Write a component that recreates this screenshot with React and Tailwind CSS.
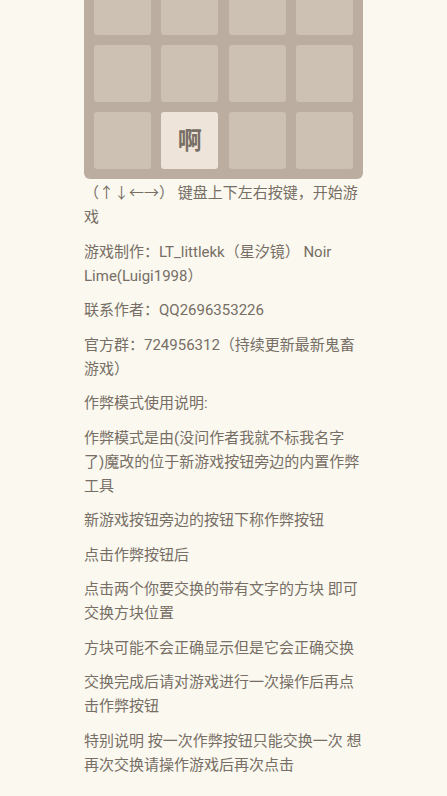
import React from "react";

const grid = [
  ["", "", "", ""],
  ["", "", "", ""],
  ["", "", "", ""],
  ["", "啊", "", ""],
];

const notes = [
  "（↑↓←→） 键盘上下左右按键，开始游戏",
  "游戏制作：LT_littlekk（星汐镜） Noir Lime(Luigi1998）",
  "联系作者：QQ2696353226",
  "官方群：724956312（持续更新最新鬼畜游戏）",
  "作弊模式使用说明:",
  "作弊模式是由(没问作者我就不标我名字了)魔改的位于新游戏按钮旁边的内置作弊工具",
  "新游戏按钮旁边的按钮下称作弊按钮",
  "点击作弊按钮后",
  "点击两个你要交换的带有文字的方块 即可交换方块位置",
  "方块可能不会正确显示但是它会正确交换",
  "交换完成后请对游戏进行一次操作后再点击作弊按钮",
  "特别说明 按一次作弊按钮只能交换一次 想再次交换请操作游戏后再次点击",
];

const Tile = ({ value }) => {
  if (!value) {
    return <div className="w-[57px] h-[57px] rounded-[3px] bg-[#cdc1b4]" />;
  }
  return (
    <div className="w-[57px] h-[57px] rounded-[3px] bg-[#eee4da] flex items-center justify-center text-[24px] font-bold text-[#776e65]">
      {value}
    </div>
  );
};

export default function App() {
  return (
    <div
      className="min-h-[796px] bg-[#faf8ef] overflow-hidden"
      style={{ fontFamily: 'Roboto, "Noto Sans CJK SC", sans-serif' }}
    >
      <div className="w-[279px] ml-[84px]">
        <div className="-mt-[99px] bg-[#bbada0] rounded-[6px] p-[10px] grid grid-cols-4 gap-[10px]">
          {grid.flat().map((v, i) => (
            <Tile key={i} value={v} />
          ))}
        </div>
        <div className="mt-[2px] text-[15px] leading-[24px] text-[#776e65]">
          {notes.map((t, i) => (
            <p key={i} className="mb-[10.5px]">
              {t}
            </p>
          ))}
        </div>
      </div>
    </div>
  );
}
